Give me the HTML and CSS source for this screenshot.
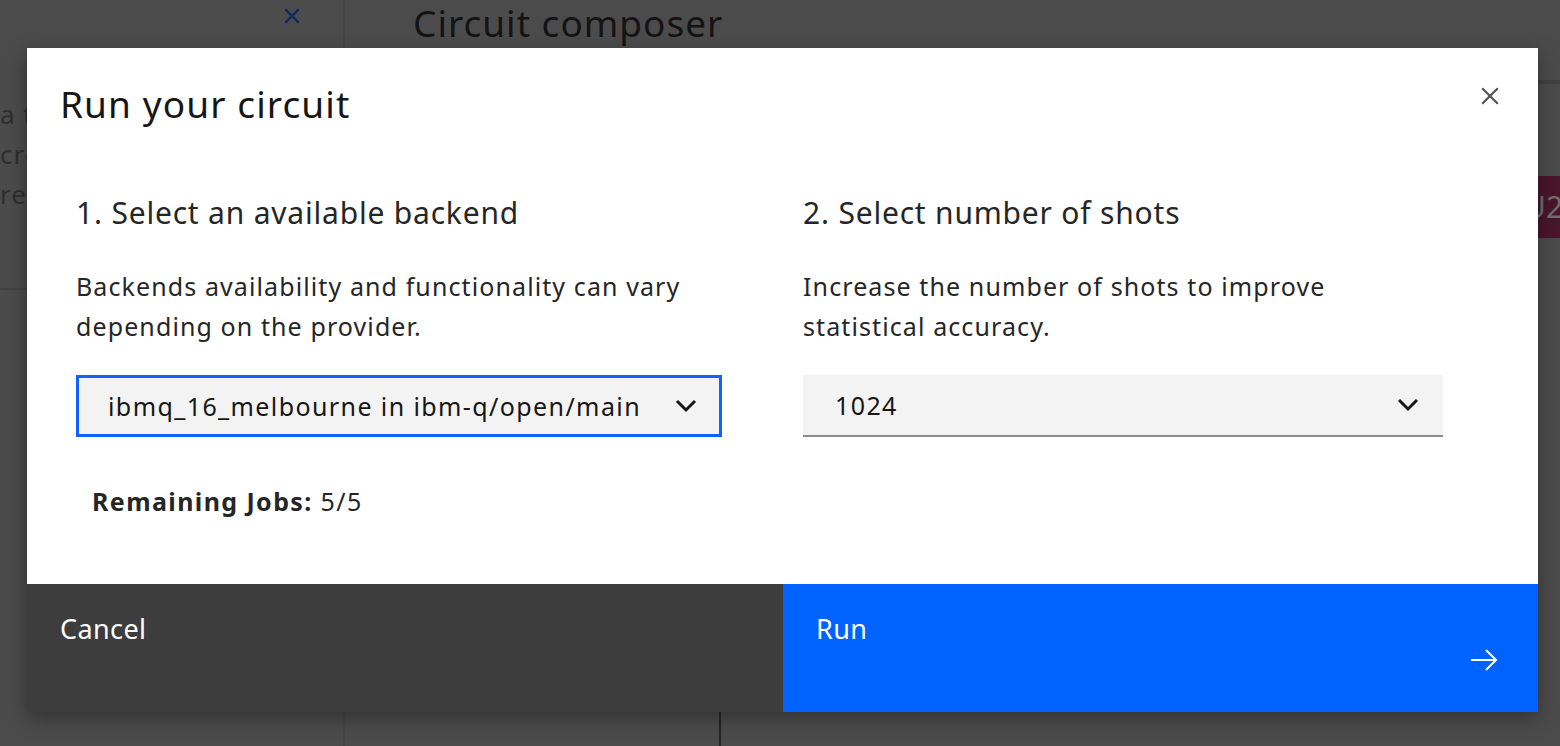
FILE: index.html
```html
<!DOCTYPE html>
<html lang="en">
<head>
<meta charset="utf-8">
<title>Run your circuit</title>
<link rel="stylesheet" href="styles.css">
</head>
<body>
<div class="app">
  <aside class="side">
    <div class="side-top">
      <svg class="side-close" viewBox="0 0 20 20" width="22" height="22"><path d="M4 4L16 16M16 4L4 16" stroke="#0d2a5e" stroke-width="2" fill="none"/></svg>
    </div>
    <div class="side-text">
      <p>a t</p>
      <p>cre</p>
      <p>res</p>
    </div>
    <div class="side-rule"></div>
  </aside>
  <main class="main">
    <h1 class="main-title">Circuit composer</h1>
    <div class="main-body">
      <div class="rail-line"></div>
      <div class="rail-badge">U2</div>
    </div>
    <div class="main-foot">
      <div class="foot-cell"></div>
    </div>
  </main>
</div>

<div class="modal" role="dialog" aria-label="Run your circuit">
  <div class="modal-head">
    <h2 class="modal-title">Run your circuit</h2>
    <button class="modal-close" aria-label="Close">
      <svg viewBox="0 0 20 20" width="24" height="24"><path d="M3.5 3.5L16.5 16.5M16.5 3.5L3.5 16.5" stroke="#525252" stroke-width="1.8" fill="none"/></svg>
    </button>
  </div>
  <div class="modal-body">
    <section class="col">
      <h3 class="col-title">1. Select an available backend</h3>
      <p class="col-text">Backends availability and functionality can vary depending on the provider.</p>
      <div class="select select-focus">
        <span class="select-value">ibmq_16_melbourne in ibm-q/open/main</span>
        <svg class="chev" viewBox="0 0 22 14" width="22" height="14"><path d="M2 2L11 11L20 2" stroke="#161616" stroke-width="3" fill="none"/></svg>
      </div>
      <p class="jobs"><strong>Remaining Jobs:</strong> 5/5</p>
    </section>
    <section class="col">
      <h3 class="col-title">2. Select number of shots</h3>
      <p class="col-text">Increase the number of shots to improve statistical accuracy.</p>
      <div class="select select-plain">
        <span class="select-value">1024</span>
        <svg class="chev" viewBox="0 0 22 14" width="22" height="14"><path d="M2 2L11 11L20 2" stroke="#161616" stroke-width="3" fill="none"/></svg>
      </div>
    </section>
  </div>
  <div class="modal-foot">
    <button class="btn btn-cancel">Cancel</button>
    <button class="btn btn-run">Run
      <svg class="btn-arrow" viewBox="0 0 32 32" width="32" height="32"><path d="M3 16H28M18 6L28 16L18 26" stroke="#ffffff" stroke-width="2" fill="none"/></svg>
    </button>
  </div>
</div>
</body>
</html>
```

FILE: styles.css
```css
* { box-sizing: border-box; }
html, body {
  margin: 0;
  padding: 0;
  width: 1560px;
  height: 746px;
  overflow: hidden;
}
body {
  background: #4b4b4b;
  font-family: "Noto Sans", "Liberation Sans", sans-serif;
  color: #161616;
}
.app {
  display: grid;
  grid-template-columns: 345px 1fr;
  height: 746px;
}
.side {
  border-right: 2px solid #464646;
  display: flex;
  flex-direction: column;
}
.side-top {
  height: 48px;
  display: flex;
  justify-content: flex-end;
  padding: 5px 40px 0 0;
}
.side-text {
  padding-top: 46px;
}
.side-text p {
  margin: 0;
  font-size: 26px;
  line-height: 40px;
  color: #2e2e2e;
  letter-spacing: 1px;
}
.side-rule {
  margin-top: 74px;
  border-top: 2px solid #424242;
}
.main {
  display: flex;
  flex-direction: column;
}
.main-title {
  margin: 0;
  padding: 0 0 0 68px;
  font-weight: 400;
  font-size: 37px;
  line-height: 46px;
  letter-spacing: 1px;
  color: #141414;
}
.main-body {
  display: flex;
  flex-direction: column;
  align-items: flex-end;
}
.rail-line {
  margin-top: 34px;
  width: 30px;
  height: 4px;
  background: #414141;
}
.rail-badge {
  margin-top: 92px;
  width: 30px;
  height: 62px;
  background: #4a1629;
  color: #6e6e6e;
  font-size: 30px;
  line-height: 62px;
  text-indent: -6px;
  overflow: hidden;
  white-space: nowrap;
}
.main-foot {
  margin-top: auto;
  height: 34px;
}
.foot-cell {
  width: 376px;
  height: 34px;
  border-right: 2px solid #262626;
}

/* Modal */
.modal {
  position: absolute;
  left: 27px;
  top: 48px;
  width: 1511px;
  height: 664px;
  background: #ffffff;
  display: flex;
  flex-direction: column;
  box-shadow: 0 6px 18px rgba(0, 0, 0, 0.35);
}
.modal-head {
  display: flex;
  justify-content: space-between;
  align-items: flex-start;
  padding: 30px 36px 0 33px;
}
.modal-title {
  margin: 0;
  font-weight: 400;
  font-size: 37px;
  line-height: 52px;
  letter-spacing: 1.1px;
  color: #161616;
}
.modal-close {
  margin-top: 6px;
  border: 0;
  background: none;
  padding: 0;
  width: 24px;
  height: 24px;
  display: flex;
}
.modal-body {
  flex: 1;
  display: grid;
  grid-template-columns: 646px 640px;
  column-gap: 81px;
  padding: 63px 0 0 49px;
}
.col-title {
  margin: 0;
  font-weight: 400;
  font-size: 30px;
  line-height: 40px;
  letter-spacing: 0.8px;
  color: #262626;
}
.col-text {
  margin: 33px 0 0 0;
  font-size: 25px;
  line-height: 40px;
  letter-spacing: 1.1px;
  color: #262626;
}
.select {
  margin-top: 29px;
  height: 62px;
  background: #f3f3f3;
  display: flex;
  align-items: center;
  justify-content: space-between;
  padding: 0 24px 0 32px;
}
.select-focus {
  border: 3px solid #0f62fe;
  padding-left: 29px;
  padding-right: 22px;
}
.select-plain {
  border-bottom: 2px solid #8d8d8d;
  padding-right: 24px;
}
.select-value {
  font-size: 25px;
  letter-spacing: 1.4px;
  color: #161616;
  white-space: nowrap;
}
.chev { display: block; flex: none; }
.jobs {
  margin: 44px 0 0 16px;
  font-size: 25px;
  line-height: 40px;
  letter-spacing: 1.4px;
  color: #262626;
}
.jobs strong { font-weight: 700; }

.modal-foot {
  height: 128px;
  display: grid;
  grid-template-columns: 756px 755px;
}
.btn {
  border: 0;
  margin: 0;
  font-family: "Noto Sans", "Liberation Sans", sans-serif;
  font-size: 27px;
  letter-spacing: 0.4px;
  color: #ffffff;
  text-align: left;
  display: flex;
  justify-content: space-between;
  align-items: flex-start;
  padding: 28px 38px 0 33px;
  line-height: 34px;
}
.btn-cancel { background: #3d3d3d; }
.btn-run { background: #0063ff; }
.btn-arrow {
  align-self: flex-end;
  margin-bottom: 36px;
}
```
